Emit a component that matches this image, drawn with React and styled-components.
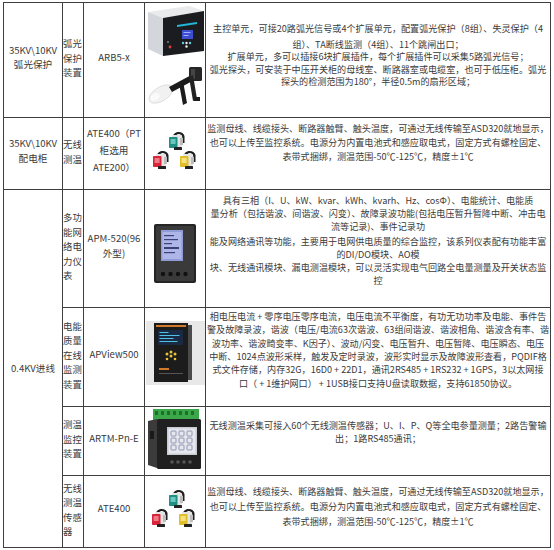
import React from "react";
import styled, { createGlobalStyle } from "styled-components";

const GlobalStyle = createGlobalStyle`
  body {
    margin: 0;
    background: #ffffff;
    font-family: "Noto Sans CJK SC", "Noto Sans", sans-serif;
    color: #3a3a3a;
  }
`;

const Page = styled.div`
  padding: 2px 0 0 3px;
`;

const Table = styled.table`
  border-collapse: collapse;
  table-layout: fixed;
  width: 547px;
  font-size: 9.6px;
`;

const Row = styled.tr`
  height: ${(p) => p.$h}px;

  & > td:not([rowspan]) {
    height: ${(p) => p.$h}px;
  }
`;

const Cell = styled.td`
  border: 1px solid #3f3f3f;
  vertical-align: middle;
  text-align: center;
  padding: 0 1px 6px;
  line-height: 14.5px;
  box-sizing: border-box;
`;

const NameCell = styled(Cell)`
  text-align: left;
  padding: 0 0 4px 0;
  font-size: 9.4px;
  word-break: break-all;
`;

const PicCell = styled(Cell)`
  padding: 0;
  vertical-align: top;
  line-height: 0;

  svg {
    display: block;
  }
`;

const DescCell = styled(Cell)`
  font-size: 9.1px;
  line-height: ${(p) => p.$lh ?? 13}px;
  padding: 0 0 ${(p) => p.$pb ?? 16}px;
`;

const Para = styled.div`
  margin-bottom: ${(p) => p.$gap ?? 0}px;
`;

const Line = styled.span`
  display: block;
  white-space: nowrap;
`;

function Lines({ items }) {
  return items.map((t, i) => <Line key={i}>{t}</Line>);
}

function Sensor({ x, y, color, light }) {
  return (
    <g transform={`translate(${x} ${y})`}>
      <path d="M5 7 C5 1 15 0 16.5 6 L16.5 13 L14.3 13 L14.3 7 C13.5 3.2 8.2 3 7.4 7 Z" fill="#1f1f1f" />
      <rect x="4" y="5" width="10" height="12" rx="1.2" fill="#e4e4e4" />
      <rect x="12" y="8" width="3" height="7" fill="#bdbdbd" />
      <rect x="1" y="7" width="8.5" height="11" rx="0.8" fill={color} />
      <rect x="2.6" y="9" width="5" height="5" fill={light} />
      <rect x="6" y="17" width="8" height="3" rx="0.6" fill="#222" />
    </g>
  );
}

function SensorTrio({ h, pos }) {
  return (
    <svg width="61" height={h} viewBox={`0 0 61 ${h}`}>
      <Sensor x={pos[0][0]} y={pos[0][1]} color="#1f8f86" light="#6cc7bf" />
      <Sensor x={pos[1][0]} y={pos[1][1]} color="#d8253a" light="#f07a86" />
      <Sensor x={pos[2][0]} y={pos[2][1]} color="#e0be2a" light="#f5e27d" />
    </svg>
  );
}

function ArcUnit() {
  return (
    <svg width="61" height="112" viewBox="0 0 61 112">
      <polygon points="3,9 44,3 59,8 18,15" fill="#e9eaec" />
      <polygon points="3,9 18,15 18,53 3,46" fill="#d3d6da" />
      <polygon points="18,15 59,8 59,48 18,53" fill="#1b1c1f" />
      <polygon points="32,22 52,19 52,21 32,24" fill="#23b6d6" />
      <rect x="37" y="27" width="11" height="9" fill="#3d4fd0" />
      <rect x="38.5" y="29" width="7" height="1" fill="#9fb0ff" />
      <rect x="38.5" y="32" width="5" height="1" fill="#9fb0ff" />
      <circle cx="38" cy="40" r="1.2" fill="#5fd0e8" />
      <circle cx="41.5" cy="40" r="1.2" fill="#f0f0f0" />
      <circle cx="45" cy="40" r="1.2" fill="#5fd0e8" />
      <circle cx="41.5" cy="43.5" r="1.2" fill="#f0f0f0" />
      <circle cx="25" cy="44" r="1.4" fill="#e04040" />
      <circle cx="23" cy="39" r="0.9" fill="#8a8a8a" />
      <g>
        <ellipse cx="16" cy="91" rx="13.5" ry="7" transform="rotate(-32 16 91)" fill="#f1f1f1" stroke="#d2d2d2" strokeWidth="0.6" />
        <ellipse cx="10" cy="94" rx="5" ry="3.5" transform="rotate(-32 10 94)" fill="#fafafa" />
        <polygon points="24,84 50,70 53,75 27,89" fill="#1c1c1c" />
        <rect x="44" y="64" width="13" height="14" rx="1.5" fill="#262626" />
        <rect x="46" y="66" width="4" height="10" fill="#454545" />
        <polygon points="34,80 38,78 42,100 38,102" fill="#1c1c1c" />
        <polygon points="44,74 48,72 52,96 48,98" fill="#232323" />
        <rect x="49" y="94" width="6" height="4" fill="#1c1c1c" />
      </g>
    </svg>
  );
}

function MeterApm() {
  return (
    <svg width="61" height="112" viewBox="0 0 61 112">
      <rect x="9" y="34" width="42" height="59" rx="2" fill="#252525" />
      <rect x="11" y="36" width="38" height="55" rx="1.5" fill="#3a3a3a" />
      <rect x="16" y="40" width="22" height="31" fill="#8f9ad6" />
      <rect x="17.5" y="42" width="19" height="27" fill="#aeb6e8" />
      <rect x="19" y="45" width="10" height="1.2" fill="#3b3f7a" />
      <rect x="19" y="49" width="14" height="1.2" fill="#3b3f7a" />
      <rect x="19" y="53" width="8" height="1.2" fill="#3b3f7a" />
      <rect x="19" y="57" width="15" height="2" fill="#3b3f7a" />
      <rect x="19" y="62" width="11" height="1.2" fill="#3b3f7a" />
      <circle cx="18" cy="84" r="2.2" fill="#111" />
      <circle cx="25.5" cy="84" r="2.2" fill="#111" />
      <circle cx="33" cy="84" r="2.2" fill="#111" />
      <circle cx="40.5" cy="84" r="2.2" fill="#111" />
    </svg>
  );
}

function DeviceApview() {
  return (
    <svg width="61" height="90" viewBox="0 0 61 90">
      <rect x="1" y="13" width="59" height="64" fill="#e8e8e8" />
      <rect x="9" y="15" width="34" height="59" fill="#1c1c1c" />
      <rect x="43" y="17" width="4" height="55" fill="#4a4a4a" />
      <rect x="11" y="17" width="30" height="2" fill="#d07a2a" />
      <rect x="13" y="22" width="25" height="15" fill="#1a2a44" />
      <rect x="14.5" y="24" width="9" height="1" fill="#4fc0e8" />
      <rect x="14.5" y="27" width="20" height="1" fill="#4fc0e8" />
      <rect x="14.5" y="30" width="14" height="1" fill="#4fc0e8" />
      <rect x="14.5" y="33" width="18" height="1" fill="#4fc0e8" />
      <circle cx="22" cy="46" r="1.5" fill="#e8c23a" />
      <circle cx="26" cy="44" r="1.5" fill="#e8c23a" />
      <circle cx="30" cy="46" r="1.5" fill="#e8c23a" />
      <circle cx="26" cy="48" r="1.5" fill="#e8c23a" />
      <circle cx="22" cy="51" r="1.3" fill="#e8c23a" />
      <circle cx="30" cy="51" r="1.3" fill="#e8c23a" />
      <rect x="14" y="60" width="10" height="2" fill="#d07a2a" />
      <rect x="14" y="65" width="24" height="1" fill="#555" />
    </svg>
  );
}

function DeviceArtm() {
  return (
    <svg width="61" height="64" viewBox="0 0 61 64">
      <rect x="8" y="2" width="46" height="11" fill="#3aa74a" />
      {[10, 16, 22, 28, 34, 40, 46].map((x) => (
        <rect key={x} x={x} y="4" width="3" height="4" fill="#1f6e2b" />
      ))}
      <polygon points="3,14 12,12 12,61 3,58" fill="#3b3b3b" />
      <rect x="12" y="12" width="44" height="50" rx="1.5" fill="#202020" />
      <rect x="22" y="20" width="30" height="28" fill="#c8cbd2" />
      <rect x="23.5" y="21.5" width="27" height="25" fill="#e6e8ee" />
      {[26, 34, 42].map((x) =>
        [24, 31, 38].map((y) => (
          <rect key={`${x}-${y}`} x={x} y={y} width="5" height="5" rx="0.8" fill="none" stroke="#7b82a6" strokeWidth="0.8" />
        ))
      )}
      <circle cx="27" cy="55" r="1.8" fill="#555" />
      <circle cx="33" cy="55" r="1.8" fill="#555" />
      <circle cx="39" cy="55" r="1.8" fill="#555" />
      <circle cx="45" cy="55" r="1.8" fill="#555" />
      <rect x="5" y="24" width="4" height="8" fill="#1a1a1a" />
    </svg>
  );
}

const ate = [
  "监测母线、线缆接头、断路器触臂、触头温度，可通过无线传输至ASD320就地显示，",
  "也可以上传至监控系统。电源分为内置电池式和感应取电式，固定方式有螺栓固定、",
  "表带式捆绑，测温范围-50℃-125℃，精度±1℃",
];

export default function App() {
  return (
    <Page>
      <GlobalStyle />
      <Table>
        <colgroup>
          <col style={{ width: 59 }} />
          <col style={{ width: 21 }} />
          <col style={{ width: 61 }} />
          <col style={{ width: 61 }} />
          <col style={{ width: 345 }} />
        </colgroup>
        <tbody>
          <Row $h={115}>
            <Cell>
              {"35KV\\10KV"}
              <br />
              弧光保护
            </Cell>
            <NameCell>弧光保护装置</NameCell>
            <Cell>ARB5-x</Cell>
            <PicCell>
              <ArcUnit />
            </PicCell>
            <DescCell $pb={11} $lh={12.5}>
              <Para $gap={3.5}>
                <Lines items={["主控单元，可接20路弧光信号或4个扩展单元，配置弧光保护（8组）、失灵保护（4"]} />
              </Para>
              <Lines
                items={[
                  "组）、TA断线监测（4组）、11个跳闸出口；",
                  "扩展单元，多可以插接6块扩展插件，每个扩展插件可以采集5路弧光信号；",
                  "弧光探头，可安装于中压开关柜的母线室、断路器室或电缆室，也可于低压柜。弧光",
                  "探头的检测范围为180°，半径0.5m的扇形区域；",
                ]}
              />
            </DescCell>
          </Row>
          <Row $h={72}>
            <Cell>
              {"35KV\\10KV"}
              <br />
              配电柜
            </Cell>
            <NameCell>无线测温</NameCell>
            <Cell style={{ lineHeight: "17px" }}>
              ATE400（PT
              <br />
              柜选用
              <br />
              ATE200）
            </Cell>
            <PicCell>
              <SensorTrio h={70} pos={[[23, 12], [7, 31], [34, 31]]} />
            </PicCell>
            <DescCell $pb={23} $lh={14}>
              <Lines items={ate} />
            </DescCell>
          </Row>
          <Row $h={118}>
            <Cell rowSpan={4} style={{ paddingBottom: 0 }}>
              0.4KV进线
            </Cell>
            <NameCell>多功能网络电力仪表</NameCell>
            <Cell>
              APM-520(96
              <br />
              外型)
            </Cell>
            <PicCell>
              <MeterApm />
            </PicCell>
            <DescCell $pb={16}>
              <Para $gap={2}>
                <Lines
                  items={[
                    "具有三相（I、U、kW、kvar、kWh、kvarh、Hz、cosΦ）、电能统计、电能质",
                    "量分析（包括谐波、间谐波、闪变）、故障录波功能(包括电压暂升暂降中断、冲击电",
                    "流等记录)、事件记录功",
                  ]}
                />
              </Para>
              <Para>
                <Lines
                  items={[
                    "能及网络通讯等功能，主要用于电网供电质量的综合监控，该系列仪表配有功能丰富",
                    "的DI/DO模块、AO模",
                  ]}
                />
              </Para>
              <Para>
                <Lines
                  items={[
                    "块、无线通讯模块、漏电测温模块，可以灵活实现电气回路全电量测量及开关状态监",
                    "控",
                  ]}
                />
              </Para>
            </DescCell>
          </Row>
          <Row $h={99}>
            <NameCell>电能质量在线监测装置</NameCell>
            <Cell>APView500</Cell>
            <PicCell>
              <DeviceApview />
            </PicCell>
            <DescCell $pb={14} $lh={13.4}>
              <Lines
                items={[
                  "相电压电流 + 零序电压零序电流，电压电流不平衡度，有功无功功率及电能、事件告",
                  "警及故障录波，谐波（电压/电流63次谐波、63组间谐波、谐波相角、谐波含有率、谐",
                  "波功率、谐波畸变率、K因子）、波动/闪变、电压暂升、电压暂降、电压瞬态、电压",
                  "中断、1024点波形采样，触发及定时录波，波形实时显示及故障波形查看，PQDIF格",
                  "式文件存储，内存32G，16D0 + 22D1，通讯2RS485 + 1RS232 + 1GPS，3以太网接",
                  "口（ + 1维护网口） + 1USB接口支持U盘读取数据，支持61850协议。",
                ]}
              />
            </DescCell>
          </Row>
          <Row $h={69}>
            <NameCell>测温监控装置</NameCell>
            <Cell>ARTM-Pn-E</Cell>
            <PicCell>
              <DeviceArtm />
            </PicCell>
            <DescCell $pb={18}>
              <Lines
                items={[
                  "无线测温采集可接入60个无线测温传感器；U、I、P、Q等全电参量测量；2路告警输",
                  "出；1路RS485通讯；",
                ]}
              />
            </DescCell>
          </Row>
          <Row $h={72}>
            <NameCell>无线测温传感器</NameCell>
            <Cell>ATE400</Cell>
            <PicCell>
              <SensorTrio h={70} pos={[[23, 12], [6, 31], [33, 31]]} />
            </PicCell>
            <DescCell $pb={11} $lh={15}>
              <Lines items={ate} />
            </DescCell>
          </Row>
        </tbody>
      </Table>
    </Page>
  );
}
